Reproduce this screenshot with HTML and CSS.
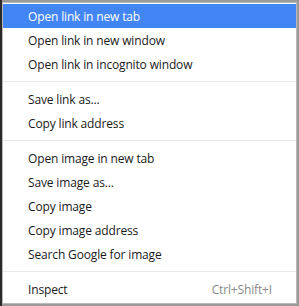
FILE: index.html
```html
<!DOCTYPE html>
<html>
<head>
<meta charset="utf-8">
<link rel="stylesheet" href="styles.css">
</head>
<body>
<div class="frame">
  <ul class="menu">
    <li class="item active">Open link in new tab</li>
    <li class="item">Open link in new window</li>
    <li class="item">Open link in incognito window</li>
    <li class="sep"></li>
    <li class="item">Save link as...</li>
    <li class="item">Copy link address</li>
    <li class="sep"></li>
    <li class="item">Open image in new tab</li>
    <li class="item">Save image as...</li>
    <li class="item">Copy image</li>
    <li class="item">Copy image address</li>
    <li class="item">Search Google for image</li>
    <li class="sep"></li>
    <li class="item"><span>Inspect</span><span class="shortcut">Ctrl+Shift+I</span></li>
  </ul>
</div>
</body>
</html>
```
FILE: styles.css
```css
html, body {
  margin: 0;
  padding: 0;
}
body {
  width: 299px;
  height: 306px;
  background: #8a8a8a;
  overflow: hidden;
}
.frame {
  padding: 2px 2px 0 2px;
  background: linear-gradient(to right, #2a2a2a 0, #2a2a2a 2px, #9a9a9a 2px);
  height: 304px;
}
.menu {
  list-style: none;
  margin: 0;
  padding: 1px 0 2px 0;
  width: 293px;
  background: #fff;
  border: 1px solid #b9b9b9;
  font-family: "Open Sans", "Noto Sans", sans-serif;
  font-size: 12px;
  letter-spacing: -0.15px;
  color: #1a1a1a;
}
.item {
  box-sizing: border-box;
  height: 24px;
  display: flex;
  align-items: center;
  justify-content: space-between;
  padding: 1px 24px 0 25px;
}
.item.active {
  background: #4285f4;
  color: #fff;
}
.shortcut {
  color: #8a8a8a;
}
.sep {
  height: 1px;
  background: #e9e9e9;
  margin: 5px 0 5px;
}
```
